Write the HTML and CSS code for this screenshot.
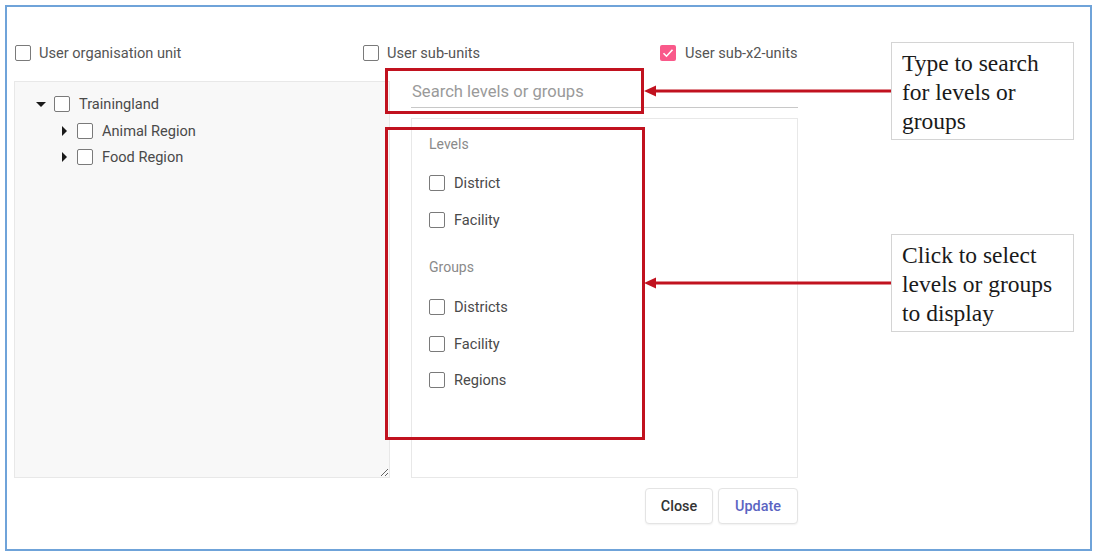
FILE: index.html
```html
<!DOCTYPE html>
<html>
<head>
<meta charset="utf-8">
<link rel="stylesheet" href="styles.css">
</head>
<body>
<div class="frame">
  <div class="top-row">
    <label class="opt opt-1"><span class="cb"></span>User organisation unit</label>
    <label class="opt opt-2"><span class="cb"></span>User sub-units</label>
    <label class="opt"><span class="cb cb-on"><svg viewBox="0 0 16 16" width="16" height="16"><path d="M3.5 8.2l3 3 6-6.5" fill="none" stroke="#fff" stroke-width="1.6"/></svg></span>User sub-x2-units</label>
  </div>
  <div class="main">
    <div class="tree-panel">
      <div class="tree-row">
        <span class="caret caret-down"></span><span class="cb"></span><span>Trainingland</span>
      </div>
      <div class="tree-row child">
        <span class="caret caret-right"></span><span class="cb"></span><span>Animal Region</span>
      </div>
      <div class="tree-row child">
        <span class="caret caret-right"></span><span class="cb"></span><span>Food Region</span>
      </div>
    </div>
    <div class="right-col">
      <div class="search">Search levels or groups</div>
      <div class="list-box">
        <div class="list-title">Levels</div>
        <label class="list-item"><span class="cb"></span>District</label>
        <label class="list-item"><span class="cb"></span>Facility</label>
        <div class="list-title groups">Groups</div>
        <label class="list-item"><span class="cb"></span>Districts</label>
        <label class="list-item"><span class="cb"></span>Facility</label>
        <label class="list-item"><span class="cb"></span>Regions</label>
      </div>
      <div class="buttons">
        <button class="btn btn-close">Close</button>
        <button class="btn btn-update">Update</button>
      </div>
    </div>
  </div>

  <div class="mark mark-search"></div>
  <div class="mark mark-list"></div>
  <svg class="arrow arrow-1" width="248" height="14" viewBox="0 0 248 14"><line x1="10" y1="7" x2="248" y2="7" stroke="#c1121f" stroke-width="3"/><polygon points="1,7 13,1.5 13,12.5" fill="#c1121f"/></svg>
  <svg class="arrow arrow-2" width="248" height="14" viewBox="0 0 248 14"><line x1="10" y1="7" x2="248" y2="7" stroke="#c1121f" stroke-width="3"/><polygon points="1,7 13,1.5 13,12.5" fill="#c1121f"/></svg>
  <div class="callout callout-1">Type to search for levels or groups</div>
  <div class="callout callout-2">Click to select levels or groups to display</div>
</div>
</body>
</html>
```
FILE: styles.css
```css
* { box-sizing: border-box; }
html, body { margin: 0; padding: 0; background: #fff; }
body {
  font-family: Roboto, "Liberation Sans", Arial, sans-serif;
  font-size: 14.6px;
  color: #555;
}
.frame {
  position: relative;
  margin: 5px 0 0 5px;
  width: 1087px;
  height: 546px;
  border: 2px solid #6fa3d9;
}
.top-row {
  display: flex;
  margin-top: 37px;
  padding-left: 8px;
  height: 18px;
  align-items: center;
}
.opt {
  display: flex;
  align-items: center;
  line-height: 18px;
  white-space: nowrap;
}
.opt .cb { margin-right: 8px; }
.opt-1 { width: 348px; }
.opt-2 { width: 297px; }
.opt .cb-on { margin-right: 9px; }
.cb {
  display: inline-block;
  flex: none;
  width: 16px;
  height: 16px;
  border: 1.6px solid #7a7a7a;
  border-radius: 2px;
  background: #fff;
  position: relative;
}
.cb-on {
  border: none;
  background: #f9598a;
}
.cb-on svg { display: block; }
.main {
  display: flex;
  margin-top: 19px;
  margin-left: 7px;
}
.tree-panel {
  width: 376px;
  height: 397px;
  background: #f8f8f8;
  border: 1px solid #e8e8e8;
  padding: 9px 0 0 20px;
  resize: both;
  overflow: hidden;
}
.tree-row {
  display: flex;
  align-items: center;
  height: 26.5px;
  color: #4a4a4a;
}
.tree-row.child { padding-left: 23px; }
.caret {
  width: 12px;
  height: 12px;
  margin-right: 7px;
  position: relative;
  flex: none;
}
.caret-down::after {
  content: "";
  position: absolute;
  left: 1px; top: 4px;
  border-left: 5px solid transparent;
  border-right: 5px solid transparent;
  border-top: 5px solid #1a1a1a;
}
.caret-right::after {
  content: "";
  position: absolute;
  left: 4px; top: 1px;
  border-top: 5px solid transparent;
  border-bottom: 5px solid transparent;
  border-left: 5px solid #1a1a1a;
}
.tree-row .cb { margin-right: 9px; }
.right-col {
  margin-left: 21px;
  width: 387px;
  display: flex;
  flex-direction: column;
}
.search {
  height: 27px;
  padding-top: 2px;
  padding-left: 1px;
  line-height: 18px;
  font-size: 16.6px;
  color: #9a9a9a;
  border-bottom: 1px solid #c8c8c8;
}
.list-box {
  margin-top: 10px;
  height: 360px;
  border: 1px solid #e8e8e8;
  padding: 15px 0 0 17px;
}
.list-title {
  height: 20px;
  line-height: 20px;
  font-size: 14px;
  color: #8a8a8a;
  margin-bottom: 11px;
}
.list-title.groups { margin-top: 19px; margin-bottom: 12px; }
.list-item {
  display: flex;
  align-items: center;
  height: 36.5px;
  color: #4a4a4a;
}
.list-item .cb { margin-right: 9px; }
.buttons {
  display: flex;
  justify-content: flex-end;
  gap: 5px;
  margin-top: 10px;
}
.btn {
  height: 36px;
  font-family: Roboto, "Liberation Sans", Arial, sans-serif;
  font-size: 14.4px;
  font-weight: 500;
  background: #fff;
  border: 1px solid #e4e4e4;
  border-radius: 4px;
  box-shadow: 0 1px 2px rgba(0,0,0,0.06);
}
.btn-close { width: 68px; color: #333; }
.btn-update { width: 80px; color: #5b64c2; }
.mark {
  position: absolute;
  border: 3px solid #c1121f;
}
.mark-search { left: 378px; top: 61px; width: 259px; height: 46px; }
.mark-list { left: 378px; top: 120px; width: 260px; height: 313px; }
.arrow { position: absolute; left: 636px; }
.arrow-1 { top: 77px; }
.arrow-2 { top: 269px; }
.callout {
  position: absolute;
  left: 884px;
  width: 183px;
  height: 98px;
  border: 1px solid #d4d4d4;
  background: #fff;
  padding: 6px 11px 0 10px;
  font-family: "Liberation Serif", "Times New Roman", serif;
  font-size: 23.5px;
  line-height: 29px;
  color: #1a1a1a;
}
.callout-1 { top: 35px; }
.callout-2 { top: 227px; }
```
